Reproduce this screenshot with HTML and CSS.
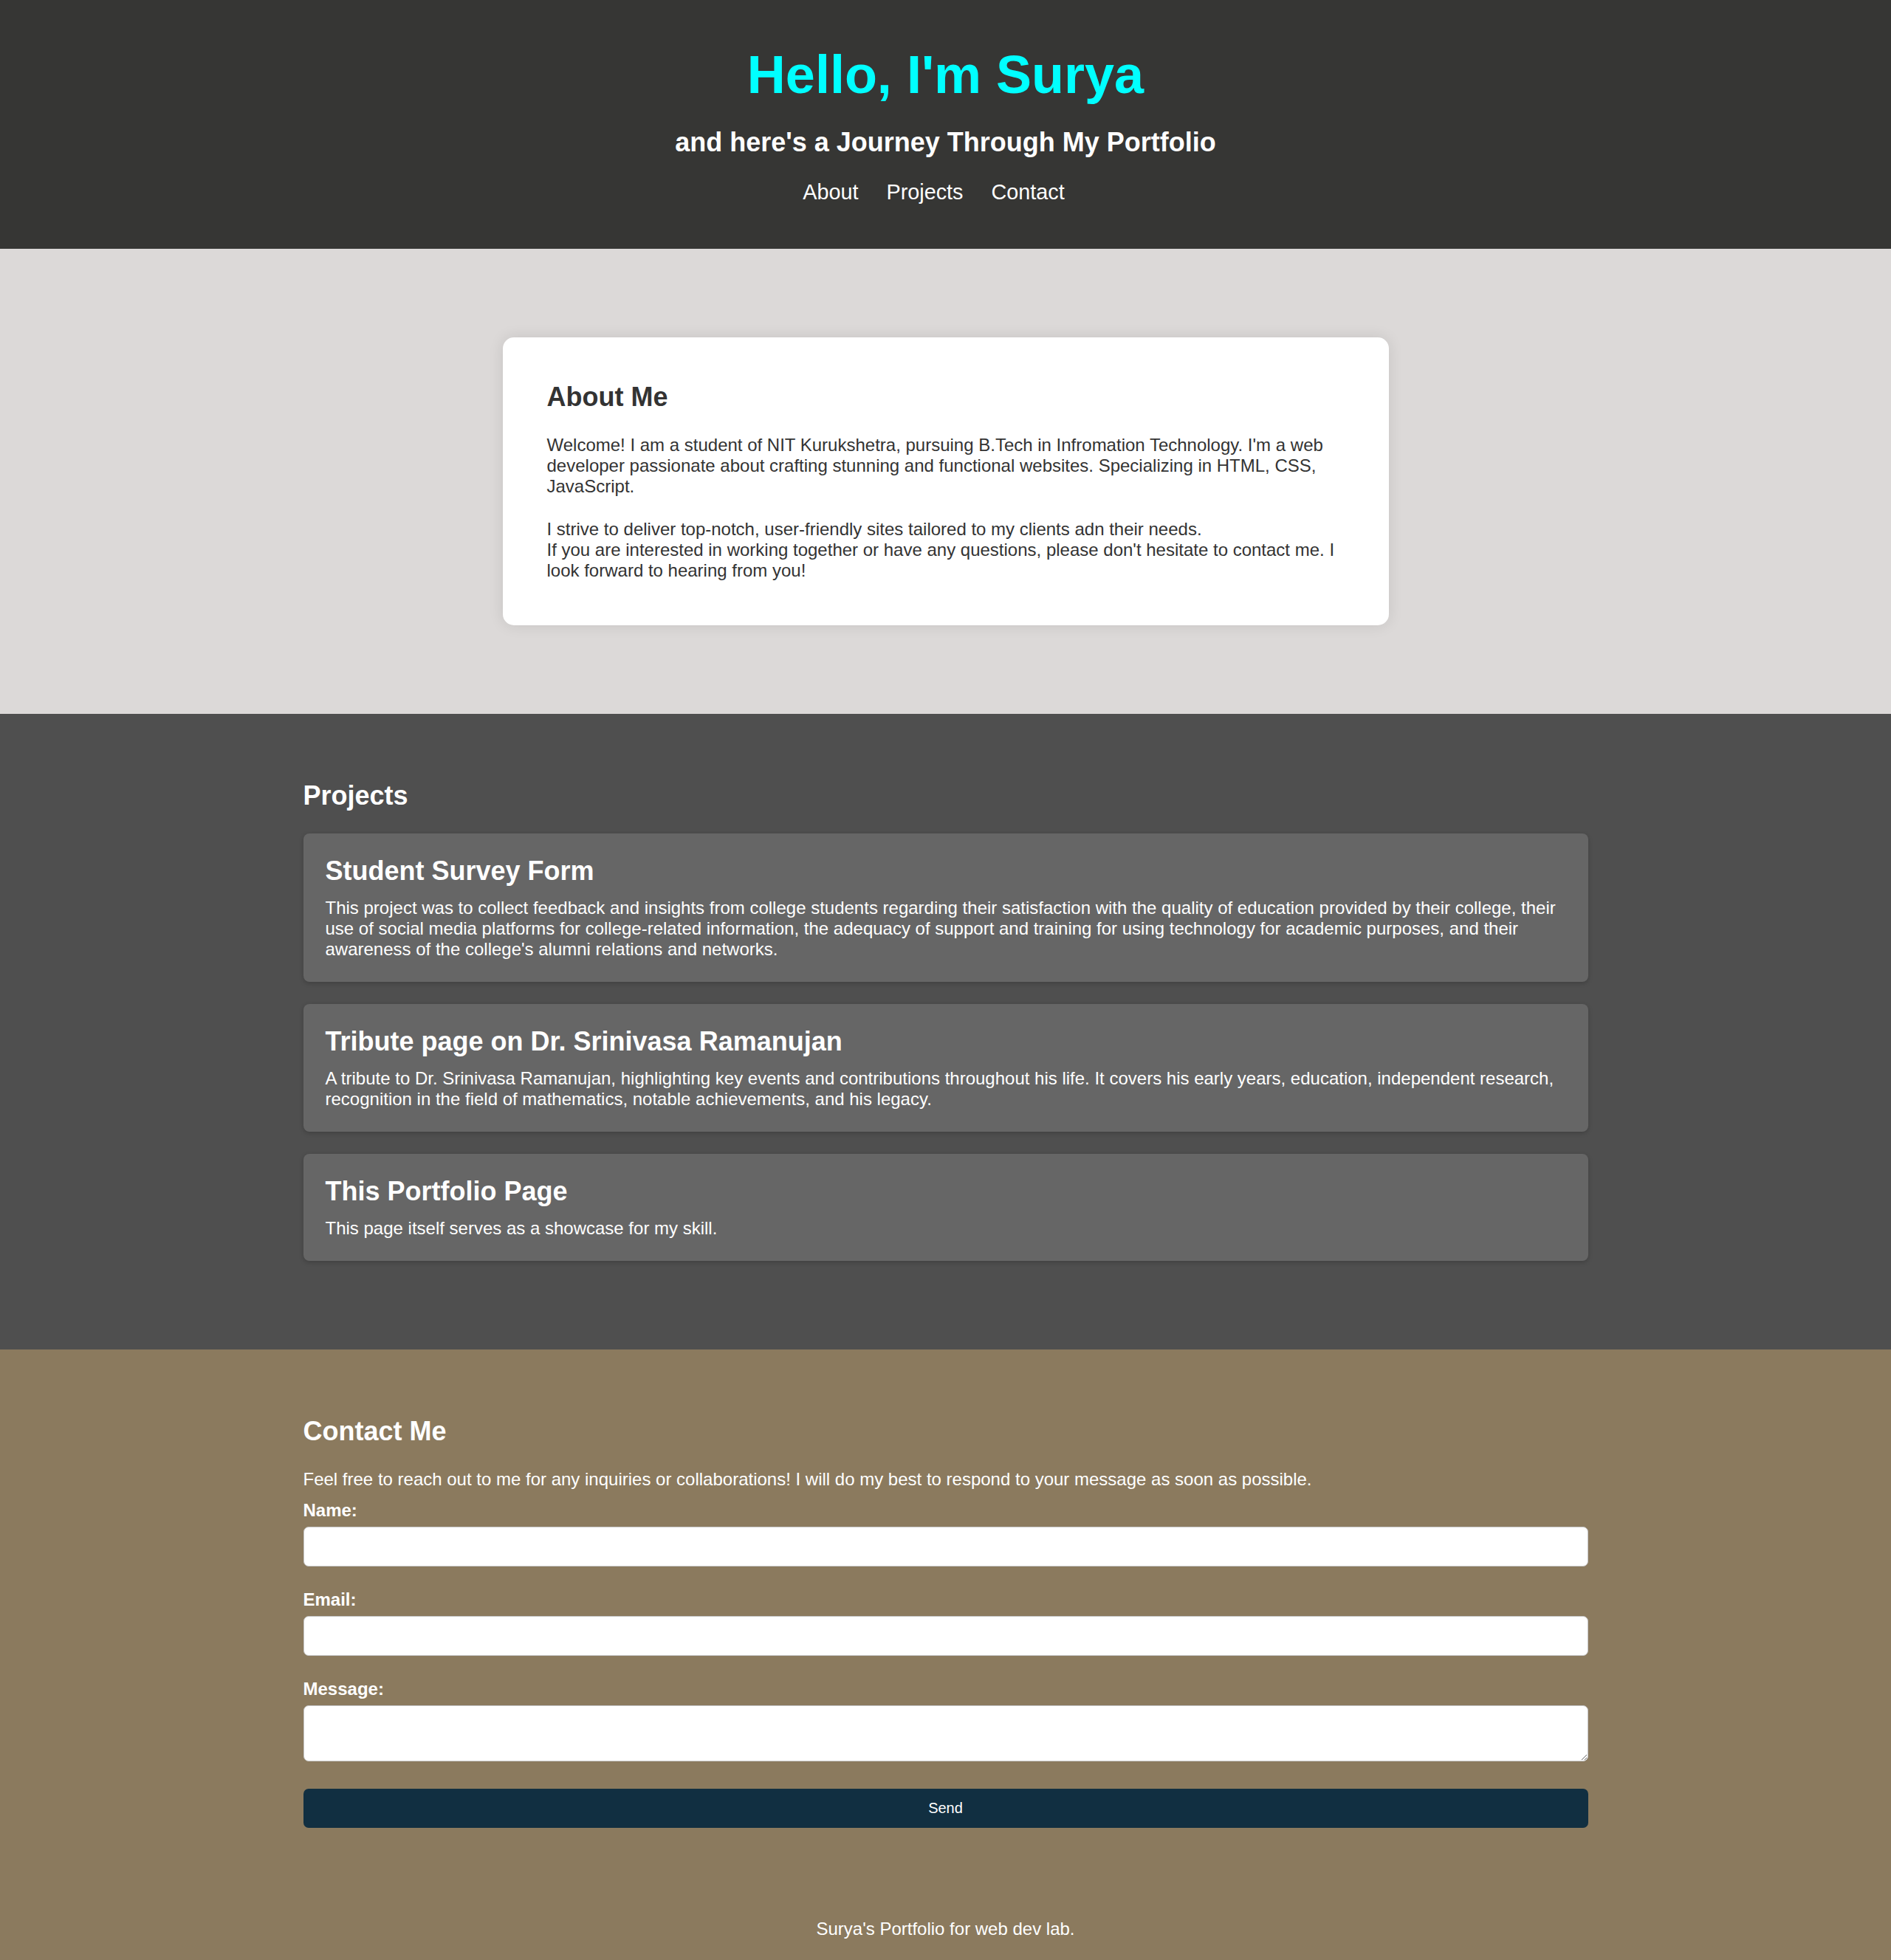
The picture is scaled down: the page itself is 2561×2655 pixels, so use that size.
FILE: index.html
```html
<!DOCTYPE html>
<html lang="en">
<head>
<meta charset="UTF-8">
<title>Surya's Portfolio</title>
<link rel="stylesheet" href="styles.css">
</head>
<body>
<header class="site-header">
  <h1 class="hero-title">Hello, I'm Surya</h1>
  <p class="hero-subtitle">and here's a Journey Through My Portfolio</p>
  <nav class="main-nav">
    <a href="#about">About</a>
    <a href="#projects">Projects</a>
    <a href="#contact">Contact</a>
  </nav>
</header>

<section class="about-section" id="about">
  <div class="about-card">
    <h2 class="about-title">About Me</h2>
    <p class="about-text">Welcome! I am a student of NIT Kurukshetra, pursuing B.Tech in Infromation Technology. I'm a web developer passionate about crafting stunning and functional websites. Specializing in HTML, CSS, JavaScript.</p>
    <p class="about-text about-text-second">I strive to deliver top-notch, user-friendly sites tailored to my clients adn their needs.<br>If you are interested in working together or have any questions, please don't hesitate to contact me. I look forward to hearing from you!</p>
  </div>
</section>

<section class="projects-section" id="projects">
  <div class="container">
    <h2 class="section-title">Projects</h2>
    <div class="project-card">
      <h3 class="project-title">Student Survey Form</h3>
      <p class="project-text">This project was to collect feedback and insights from college students regarding their satisfaction with the quality of education provided by their college, their use of social media platforms for college-related information, the adequacy of support and training for using technology for academic purposes, and their awareness of the college's alumni relations and networks.</p>
    </div>
    <div class="project-card">
      <h3 class="project-title">Tribute page on Dr. Srinivasa Ramanujan</h3>
      <p class="project-text">A tribute to Dr. Srinivasa Ramanujan, highlighting key events and contributions throughout his life. It covers his early years, education, independent research, recognition in the field of mathematics, notable achievements, and his legacy.</p>
    </div>
    <div class="project-card">
      <h3 class="project-title">This Portfolio Page</h3>
      <p class="project-text">This page itself serves as a showcase for my skill.</p>
    </div>
  </div>
</section>

<section class="contact-section" id="contact">
  <div class="container">
    <h2 class="section-title">Contact Me</h2>
    <p class="contact-intro">Feel free to reach out to me for any inquiries or collaborations! I will do my best to respond to your message as soon as possible.</p>
    <form class="contact-form">
      <label class="form-label" for="name">Name:</label>
      <input class="form-field" type="text" id="name" name="name">
      <label class="form-label" for="email">Email:</label>
      <input class="form-field" type="email" id="email" name="email">
      <label class="form-label" for="message">Message:</label>
      <textarea class="form-field form-textarea" id="message" name="message"></textarea>
      <button class="send-button" type="submit">Send</button>
    </form>
  </div>
</section>

<footer class="site-footer">
  <p class="footer-text">Surya's Portfolio for web dev lab.</p>
</footer>
</body>
</html>
```

FILE: styles.css
```css
* {
  box-sizing: border-box;
}

html, body {
  margin: 0;
  padding: 0;
}

body {
  font-family: "Liberation Sans", Arial, sans-serif;
  font-size: 24px;
  line-height: normal;
  background: #8b7a5e;
}

/* Header */
.site-header {
  background: #363634;
  text-align: center;
  padding: 60px 0 60px;
}

.hero-title {
  margin: 0 0 30px;
  font-size: 72px;
  font-weight: bold;
  color: #00ffff;
}

.hero-subtitle {
  margin: 0 0 30px;
  font-size: 36px;
  font-weight: bold;
  color: #ffffff;
}

.main-nav {
  display: flex;
  justify-content: center;
  gap: 38px;
  padding-right: 32px;
}

.main-nav a {
  font-size: 28.8px;
  color: #ffffff;
  text-decoration: none;
}

/* About */
.about-section {
  background: #dcd9d8;
  padding: 120px 0;
}

.about-card {
  width: 1200px;
  margin: 0 auto;
  background: #ffffff;
  border-radius: 15px;
  padding: 60px;
  box-shadow: 0 0 20px rgba(0, 0, 0, 0.1);
  color: #333333;
}

.about-title {
  margin: 0 0 30px;
  font-size: 36px;
}

.about-text {
  margin: 0;
  line-height: 28px;
}

.about-text-second {
  margin-top: 30px;
}

/* Shared container */
.container {
  width: 1740px;
  margin: 0 auto;
}

.section-title {
  margin: 30px 0;
  font-size: 36px;
  color: #ffffff;
}

/* Projects */
.projects-section {
  background: #4f4f4f;
  padding: 60px 0 90px;
}

.project-card {
  background: #666666;
  border-radius: 8px;
  padding: 30px;
  margin-bottom: 30px;
  box-shadow: 0 2px 6px rgba(0, 0, 0, 0.2);
  color: #ffffff;
}

.project-title {
  margin: 0 0 15px;
  font-size: 36px;
}

.project-text {
  margin: 0;
  line-height: 28px;
}

/* Contact */
.contact-section {
  background: #8b7a5e;
  padding: 60px 0 93px;
  color: #ffffff;
}

.contact-intro {
  margin: 30px 0 14px;
}

.contact-form {
  display: flex;
  flex-direction: column;
}

.form-label {
  display: block;
  font-weight: bold;
  margin-bottom: 8px;
}

.form-field {
  display: block;
  width: 100%;
  height: 54px;
  margin: 0 0 31px;
  border: 1px solid #c4c4c4;
  border-radius: 7px;
  background: #ffffff;
  font-family: "Liberation Sans", Arial, sans-serif;
  font-size: 21px;
  padding: 12px 15px;
}

.form-textarea {
  height: 76px;
  margin-bottom: 37px;
  resize: vertical;
}

.send-button {
  display: block;
  width: 100%;
  height: 53px;
  border: none;
  border-radius: 7px;
  background: #112f41;
  color: #ffffff;
  font-family: "Liberation Sans", Arial, sans-serif;
  font-size: 20px;
  cursor: pointer;
}

/* Footer */
.site-footer {
  background: #8b7a5e;
  padding: 30px 0;
  text-align: center;
}

.footer-text {
  margin: 0;
  color: #ffffff;
}
```
